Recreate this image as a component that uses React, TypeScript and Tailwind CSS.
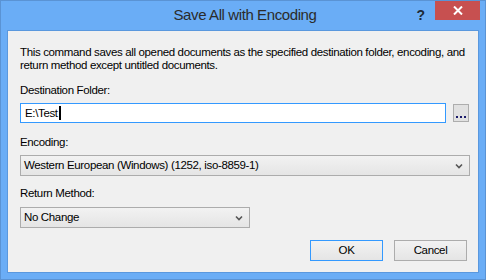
import { useState } from "react";

const font = { fontFamily: '"Segoe UI", "Liberation Sans", Arial, sans-serif' };

function Chevron() {
  return (
    <svg width="8" height="6" viewBox="0 0 8 6" className="shrink-0">
      <path d="M1 1.5 L4 4.5 L7 1.5" fill="none" stroke="#555" strokeWidth="1.6" />
    </svg>
  );
}

function Select({ value, className }: { value: string; className: string }) {
  return (
    <div
      className={`flex items-center justify-between border border-[#acacac] bg-gradient-to-b from-[#f2f2f2] to-[#e5e5e5] pl-[3px] pr-[6px] text-black ${className}`}
    >
      <span>{value}</span>
      <Chevron />
    </div>
  );
}

export default function App() {
  const [folder] = useState("E:\\Test");

  return (
    <div
      className="flex h-[280px] w-[486px] flex-col border border-[#5a93d4] bg-[#6aadf6]"
      style={font}
    >
      {/* title bar */}
      <div className="relative flex h-[29px] shrink-0 items-center justify-center">
        <span className="ml-[4px] text-[15px] tracking-[-0.4px] text-[#2b2b2b]">Save All with Encoding</span>
        <div className="absolute right-[5px] top-0 flex items-start">
          <span className="mr-[10px] mt-[4px] text-[14px] font-bold text-[#1e2a38]">?</span>
          <button className="flex h-[19px] w-[45px] items-center justify-center bg-[#c75050]">
            <svg width="10" height="9" viewBox="0 0 10 9">
              <path d="M1 0.5 L9 8.5 M9 0.5 L1 8.5" stroke="#fff" strokeWidth="2" />
            </svg>
          </button>
        </div>
      </div>

      {/* client area */}
      <div className="mx-[6px] flex h-[243px] flex-col border border-[#5a98de] bg-[#f0f0f0] pl-[12px] text-[11.5px] leading-[15px] tracking-[-0.35px] text-black">
        <p className="mt-[15px] whitespace-nowrap leading-[13px]">
          This command saves all opened documents as the specified destination folder, encoding, and
          <br />
          return method except untitled documents.
        </p>

        <div className="mt-[11px]">Destination Folder:</div>
        <div className="mt-[5px] flex items-center">
          <div className="flex h-[20px] w-[426px] items-center border border-[#3399ff] bg-white pl-[4px]">
            <span>{folder}</span>
            <span className="ml-[1px] inline-block h-[14px] w-[2px] bg-black" />
          </div>
          <button className="ml-[7px] flex h-[18px] w-[16px] items-end justify-center border border-[#adadad] bg-[#e1e1e1] pb-[3px]">
            <span className="flex gap-[2px]">
              <span className="h-[2px] w-[2px] bg-[#1a1a6a]" />
              <span className="h-[2px] w-[2px] bg-[#1a1a6a]" />
              <span className="h-[2px] w-[2px] bg-[#1a1a6a]" />
            </span>
          </button>
        </div>

        <div className="mt-[12px]">Encoding:</div>
        <Select
          value="Western European (Windows) (1252, iso-8859-1)"
          className="mt-[5px] h-[21px] w-[450px]"
        />

        <div className="mt-[10px]">Return Method:</div>
        <Select value="No Change" className="mt-[6px] h-[21px] w-[230px]" />

        <div className="mt-[12px] flex justify-end gap-[11px] pr-[11px]">
          <button className="h-[21px] w-[73px] border border-[#3399ff] bg-gradient-to-b from-[#f2f2f2] to-[#e5e5e5]">
            OK
          </button>
          <button className="h-[21px] w-[73px] border border-[#acacac] bg-gradient-to-b from-[#f2f2f2] to-[#e5e5e5]">
            Cancel
          </button>
        </div>
      </div>
    </div>
  );
}
